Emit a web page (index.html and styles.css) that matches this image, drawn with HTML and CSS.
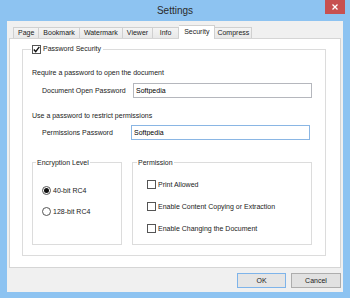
FILE: index.html
```html
<!DOCTYPE html>
<html lang="en">
  <head>
    <meta charset="UTF-8" />
    <title>Settings</title>
    <link rel="stylesheet" href="styles.css">
  </head>
  <body>
    <div class="window">
      <div class="titlebar">
        <div class="title">Settings</div>
        <div class="close">
          <svg width="6" height="6" viewBox="0 0 6 6"><path d="M0.5 0.5 L5.5 5.5 M5.5 0.5 L0.5 5.5" stroke="#fff" stroke-width="1.3"/></svg>
        </div>
      </div>
      <div class="client">
        <div class="tabs">
          <div class="tab">Page</div>
          <div class="tab">Bookmark</div>
          <div class="tab">Watermark</div>
          <div class="tab">Viewer</div>
          <div class="tab">Info</div>
          <div class="tab active">Security</div>
          <div class="tab last">Compress</div>
        </div>
        <div class="panel">
          <fieldset class="group main">
            <legend>
              <span class="check">
                <svg width="7" height="7" viewBox="0 0 7 7"><path d="M0.8 3.6 L2.7 5.6 L6.3 0.9" fill="none" stroke="#111" stroke-width="1.4"/></svg>
              </span>Password Security
            </legend>
            <p class="hint">Require a password to open the document</p>
            <div class="field">
              <label>Document Open Password</label>
              <input type="text" value="Softpedia" />
            </div>
            <p class="hint second">Use a password to restrict permissions</p>
            <div class="field tight">
              <label>Permissions Password</label>
              <input type="text" class="focused" value="Softpedia" />
            </div>
            <div class="groups">
              <fieldset class="group enc">
                <legend>Encryption Level</legend>
                <div class="option"><span class="radio on"></span>40-bit RC4</div>
                <div class="option"><span class="radio"></span>128-bit RC4</div>
              </fieldset>
              <fieldset class="group perm">
                <legend>Permission</legend>
                <div class="option"><span class="check"></span>Print Allowed</div>
                <div class="option"><span class="check"></span>Enable Content Copying or Extraction</div>
                <div class="option"><span class="check"></span>Enable Changing the Document</div>
              </fieldset>
            </div>
          </fieldset>
        </div>
        <div class="buttons">
          <button class="btn default">OK</button>
          <button class="btn">Cancel</button>
        </div>
      </div>
    </div>
  </body>
</html>
```
FILE: styles.css
```css
html,
body {
  margin: 0;
  font-family: "Liberation Sans", Arial, sans-serif;
  font-size: 7px;
  color: #222;
}

.window {
  width: 350px;
  height: 298px;
  background-color: #8dc3f1;
  display: flex;
  flex-direction: column;
}

.titlebar {
  height: 21px;
  display: flex;
  align-items: flex-start;
}

.title {
  flex: 1;
  padding-left: 25px;
  text-align: center;
  font-size: 10px;
  line-height: 22px;
  color: #2b2b2b;
}

.close {
  width: 20px;
  height: 14px;
  margin-right: 5px;
  background-color: #c75050;
  display: flex;
  align-items: center;
  justify-content: center;
}

.client {
  margin: 0 7px;
  width: 336px;
  height: 271px;
  background-color: #f0f0f0;
}

/* tabs */
.tabs {
  display: flex;
  align-items: flex-end;
  height: 13px;
  margin-top: 4px;
  padding-left: 6px;
}

.tab {
  height: 11px;
  box-sizing: border-box;
  min-width: 26px;
  padding: 0 4px;
  border: 1px solid #d0d0d0;
  border-bottom: none;
  border-left: none;
  background: linear-gradient(#f4f4f4, #e8e8e8);
  line-height: 10px;
  text-align: center;
}

.tab:first-child {
  border-left: 1px solid #d0d0d0;
}

.tab.last {
  padding: 0 2px;
}

.tab.active {
  height: 14px;
  margin-bottom: -1px;
  padding: 0 5px;
  background: #fff;
  line-height: 12px;
  position: relative;
  z-index: 1;
}

.panel {
  margin-left: 2px;
  width: 332px;
  height: 230px;
  box-sizing: border-box;
  border: 1px solid #d5d5d5;
  background-color: #fff;
}

/* group boxes */
.group {
  margin: 0;
  border: 1px solid #dcdcdc;
  box-sizing: border-box;
}

.group legend {
  line-height: 9px;
  padding: 0 1px;
}

.main {
  margin: 5px 0 0 12px;
  width: 304px;
  height: 212px;
  padding: 0 0 0 9px;
}

.main > legend {
  display: flex;
  align-items: center;
  line-height: 10px;
  padding: 0 2px 0 1px;
  margin-left: -1px;
}

.main > legend .check {
  margin-right: 2px;
}

.hint {
  margin: 14px 0 0;
  line-height: 9px;
}

.hint.second {
  margin-top: 13px;
}

.field {
  display: flex;
  align-items: center;
  margin-top: 6px;
  padding-left: 10px;
}

.field.tight {
  margin-top: 5px;
}

.field label {
  width: 91px;
}

.field.tight label {
  width: 89px;
}

input {
  width: 179px;
  height: 15px;
  box-sizing: border-box;
  margin: 0;
  padding: 0 2px;
  border: 1px solid #b5b7bd;
  font-family: "Liberation Sans", Arial, sans-serif;
  font-size: 7px;
  color: #000;
}

input.focused {
  border-color: #8ab6e4;
}

.groups {
  display: flex;
  gap: 10px;
  margin-top: 18px;
}

.enc,
.perm {
  height: 87px;
  padding: 0 4px;
}

.enc {
  width: 90px;
}

.perm {
  width: 180px;
}

.enc legend {
  margin-left: -1px;
}

.option {
  display: flex;
  align-items: center;
  gap: 2px;
  line-height: 9px;
}

.enc .option {
  margin-top: 12px;
  padding-left: 5px;
}

.enc .option:first-of-type {
  margin-top: 19px;
}

.perm .option {
  margin-top: 13px;
  padding-left: 10px;
}

.check {
  width: 9px;
  height: 9px;
  box-sizing: border-box;
  border: 1px solid #555;
  background-color: #fff;
  display: inline-flex;
  align-items: center;
  justify-content: center;
}

.radio {
  width: 9px;
  height: 9px;
  box-sizing: border-box;
  border: 1px solid #555;
  border-radius: 50%;
  background-color: #fff;
  display: inline-flex;
  align-items: center;
  justify-content: center;
}

.radio.on::after {
  content: "";
  width: 5px;
  height: 5px;
  border-radius: 50%;
  background-color: #111;
}

/* buttons */
.buttons {
  display: flex;
  justify-content: flex-end;
  gap: 5px;
  margin-top: 5px;
  padding-right: 2px;
}

.btn {
  height: 15px;
  width: 50px;
  margin: 0;
  padding: 0;
  border: 1px solid #adadad;
  background-color: #e1e1e1;
  font-family: "Liberation Sans", Arial, sans-serif;
  font-size: 7px;
  color: #1a1a1a;
}

.btn.default {
  width: 49px;
  border-color: #7eb4ea;
  background-color: #e5e5e5;
}
```
